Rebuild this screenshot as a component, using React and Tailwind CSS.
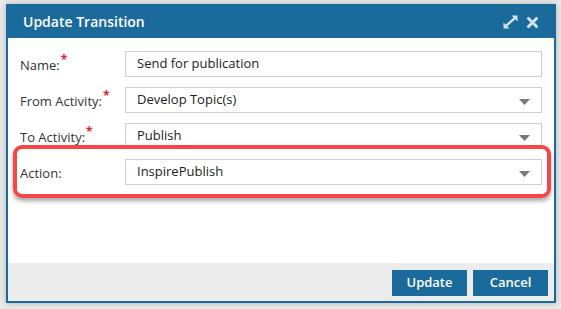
import React from "react";

const font = { fontFamily: '"Open Sans", "Noto Sans", sans-serif' };

function Caret() {
  return (
    <svg width="11" height="6" viewBox="0 0 11 6" className="absolute right-[11px] top-[11px]">
      <path d="M0 0 H11 L5.5 6 Z" fill="#7a7a7a" />
    </svg>
  );
}

function Row({ label, required, value, select, highlight }) {
  return (
    <div className="relative flex items-center h-[26px]">
      {highlight && (
        <div className="absolute left-[-7px] right-[-9px] top-[-14px] bottom-[-13px] border-[4px] border-[#f3474b] rounded-[9px] shadow-[0_3px_4px_rgba(0,0,0,0.35)] pointer-events-none" />
      )}
      <div className="w-[105px] shrink-0 text-[13px] text-[#333] leading-none pt-[2px]">
        {label}
        {required && <span className="text-[#e0242a] relative top-[-6px] ml-[1px] text-[12px] font-bold">*</span>}
      </div>
      <div className="relative flex-1 h-[26px] border border-[#cfcfcf] bg-white flex items-center pl-[11px] text-[13px] text-[#222]">
        {value}
        {select && <Caret />}
      </div>
    </div>
  );
}

export default function App() {
  return (
    <div className="w-[561px] h-[309px] bg-[#e9e9e9] relative" style={font}>
      <div className="absolute left-[6px] top-[4px] w-[550px] h-[299px] border-2 border-[#1b6a9c] bg-white flex flex-col shadow-[0_0_6px_rgba(0,0,0,0.25)]">
        <div className="h-[32px] bg-[#1b6a9c] flex items-center pl-[15px] pr-[16px] shrink-0">
          <div className="text-white text-[14px] font-semibold flex-1 mt-[-2px]">Update Transition</div>
          <svg width="15" height="14" viewBox="0 0 15 14" className="mt-[-1px] mr-[9px]">
            <path d="M3 11 L12 3" stroke="#d3e1ec" strokeWidth="2.4" fill="none" strokeLinecap="square" />
            <path d="M8.5 0.5 H14.5 V6.5 Z" fill="#d3e1ec" />
            <path d="M0.5 7.5 V13.5 H6.5 Z" fill="#d3e1ec" />
          </svg>
          <svg width="11" height="11" viewBox="0 0 11 11" className="mt-[1px]">
            <path d="M1.5 1.5 L9.5 9.5 M9.5 1.5 L1.5 9.5" stroke="#d3e1ec" strokeWidth="3" strokeLinecap="square" />
          </svg>
        </div>
        <div className="flex-1 bg-white pt-[13px] pl-[12px] pr-[12px] flex flex-col gap-[10px]">
          <Row label="Name:" required value="Send for publication" />
          <Row label="From Activity:" required value="Develop Topic(s)" select />
          <Row label="To Activity:" required value="Publish" select />
          <Row label="Action:" value="InspirePublish" select highlight />
        </div>
        <div className="h-[38px] bg-[#ececec] shrink-0 flex items-center justify-end gap-[6px] pr-[6px] pt-[1px]">
          <button className="w-[75px] h-[26px] bg-[#1b6a9c] text-white text-[13px] font-semibold">Update</button>
          <button className="w-[75px] h-[26px] bg-[#1b6a9c] text-white text-[13px] font-semibold">Cancel</button>
        </div>
      </div>
    </div>
  );
}
